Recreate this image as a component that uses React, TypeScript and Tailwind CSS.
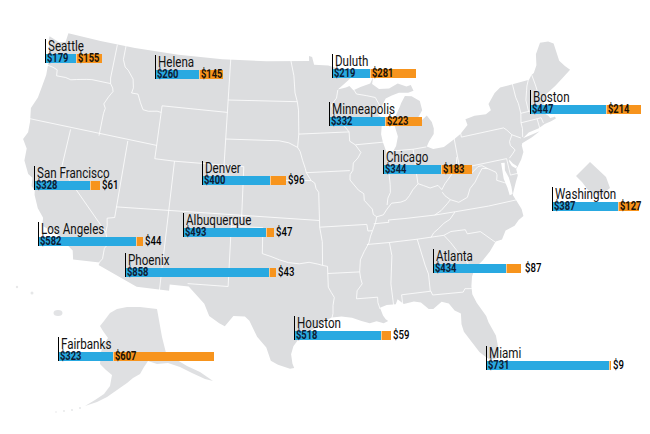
import React from "react";

type P = [number, number];
const RAD = Math.PI / 180;
const N = 0.60285;
const C = 1.3512;
function proj([lon, lat]: P): P {
  const rho = Math.sqrt(C - 2 * N * Math.sin(lat * RAD)) / N;
  const th = N * (lon + 98) * RAD;
  return [284 + 760 * rho * Math.sin(th), -776 + 760 * rho * Math.cos(th)];
}
function geoPath(pts: P[], close = false) {
  return (
    pts
      .map((p, i) => {
        const [x, y] = proj(p);
        return (i ? "L" : "M") + x.toFixed(1) + "," + y.toFixed(1);
      })
      .join("") + (close ? "Z" : "")
  );
}
function pxPath(pts: P[]) {
  return pts.map((p, i) => (i ? "L" : "M") + p[0] + "," + p[1]).join("") + "Z";
}

const outline: P[] = [
  [-124.7, 48.4], [-123.5, 48.15], [-122.8, 48.3], [-122.75, 49.0],
  [-119, 49], [-115, 49], [-110, 49], [-105, 49], [-100, 49], [-95.15, 49],
  [-95.15, 49.38], [-94.8, 49.3], [-94.6, 48.7], [-93, 48.6], [-92, 48.35],
  [-90.8, 48.1], [-89.6, 48.0], [-90.3, 47.7], [-91.3, 47.15], [-92.1, 46.75],
  [-91.2, 46.85], [-90.8, 46.95], [-90.4, 46.6], [-89.6, 46.8], [-88.5, 47.0],
  [-88.1, 47.45], [-88.3, 46.95], [-87.6, 46.5], [-86.5, 46.45], [-85.5, 46.75],
  [-84.6, 46.45], [-84.1, 46.5], [-83.9, 46.05], [-84.5, 45.95], [-85.5, 46.05],
  [-86.3, 45.9], [-87.0, 45.75], [-87.6, 45.1], [-88.0, 44.55], [-87.5, 44.3],
  [-87.7, 43.9], [-87.9, 43.1], [-87.8, 42.5], [-87.6, 41.9], [-87.5, 41.62],
  [-86.9, 41.7], [-86.5, 42.1], [-86.2, 42.8], [-86.4, 43.6], [-86.2, 44.3],
  [-85.6, 45.0], [-85.4, 45.25], [-84.9, 45.75], [-84.2, 45.65], [-83.4, 45.2],
  [-83.3, 44.5], [-83.9, 43.95], [-83.9, 43.6], [-83.5, 43.75], [-82.9, 44.05],
  [-82.5, 43.5], [-82.4, 43.0], [-82.5, 42.6], [-83.1, 42.1], [-83.4, 41.75],
  [-82.8, 41.5], [-81.7, 41.5], [-80.5, 41.95], [-79.8, 42.25], [-78.9, 42.8],
  [-79.0, 43.25], [-78.0, 43.37], [-76.8, 43.3], [-76.2, 43.5], [-76.3, 44.0],
  [-75.4, 44.7], [-74.7, 45.0], [-71.5, 45.0], [-71.1, 45.3], [-70.8, 45.4],
  [-70.3, 45.9], [-70.0, 46.7], [-69.2, 47.45], [-68.3, 47.35], [-67.8, 47.07],
  [-67.8, 45.7], [-67.4, 45.2], [-67.0, 44.8], [-68.0, 44.4], [-69.0, 44.0],
  [-70.2, 43.6], [-70.7, 43.0], [-70.6, 42.65], [-71.0, 42.3], [-70.6, 42.0],
  [-70.5, 41.8], [-70.0, 41.8], [-70.05, 42.05], [-69.95, 41.65], [-70.5, 41.55],
  [-71.2, 41.5], [-71.9, 41.3], [-73.0, 41.2], [-73.7, 40.9], [-72.6, 41.0],
  [-71.9, 41.07], [-72.8, 40.8], [-73.9, 40.55], [-74.0, 40.4], [-74.0, 39.9],
  [-74.4, 39.4], [-74.9, 38.95], [-75.1, 38.8], [-75.1, 38.3], [-75.4, 37.9],
  [-75.9, 37.15], [-76.0, 36.95], [-75.8, 36.5], [-75.5, 35.8], [-75.5, 35.25],
  [-76.0, 35.05], [-76.5, 34.7], [-77.4, 34.5], [-77.9, 33.9], [-78.5, 33.85],
  [-79.2, 33.2], [-80.0, 32.65], [-80.8, 32.2], [-81.2, 31.6], [-81.4, 30.9],
  [-81.45, 30.3], [-81.2, 29.6], [-80.6, 28.5], [-80.5, 28.0], [-80.1, 26.9],
  [-80.1, 25.8], [-80.4, 25.2], [-80.9, 25.15], [-81.2, 25.4], [-81.7, 25.9],
  [-82.1, 26.6], [-82.7, 27.6], [-82.8, 28.2], [-82.7, 29.0], [-83.2, 29.3],
  [-83.6, 29.9], [-84.2, 30.1], [-85.0, 29.65], [-85.4, 29.7], [-86.0, 30.25],
  [-86.6, 30.4], [-87.5, 30.3], [-88.0, 30.7], [-88.2, 30.35], [-89.0, 30.35],
  [-89.6, 30.2], [-89.4, 29.6], [-89.2, 29.3], [-89.0, 29.15], [-89.4, 29.0],
  [-90.0, 29.2], [-90.6, 29.1], [-91.3, 29.3], [-92.1, 29.6], [-93.0, 29.75],
  [-93.85, 29.7], [-94.7, 29.35], [-95.2, 29.0], [-96.2, 28.5], [-96.8, 28.1],
  [-97.2, 27.6], [-97.4, 27.0], [-97.3, 26.3], [-97.15, 25.95], [-97.5, 25.9],
  [-98.5, 26.2], [-99.1, 26.5], [-99.5, 27.5], [-100.3, 28.3], [-101.0, 29.5],
  [-101.4, 29.8], [-102.4, 29.8], [-103.1, 29.0], [-103.6, 29.2], [-104.5, 29.7],
  [-105.0, 30.6], [-106.0, 31.4], [-106.5, 31.8], [-108.2, 31.8], [-108.2, 31.33],
  [-111.1, 31.33], [-114.8, 32.5], [-114.7, 32.7], [-117.1, 32.55], [-117.3, 33.2],
  [-118.3, 33.75], [-118.5, 34.0], [-119.2, 34.2], [-120.5, 34.5], [-120.6, 35.1],
  [-121.3, 35.7], [-121.9, 36.6], [-122.0, 36.95], [-122.4, 37.2], [-122.5, 37.8],
  [-123.0, 38.0], [-123.7, 38.9], [-123.8, 39.8], [-124.4, 40.4], [-124.1, 41.0],
  [-124.2, 41.8], [-124.5, 42.8], [-124.1, 43.7], [-124.0, 44.6], [-123.9, 45.5],
  [-124.0, 46.3], [-124.1, 46.9], [-124.7, 48.2],
];

const chesapeake: P[] = [
  [-76.4, 39.5], [-76.05, 39.45], [-76.2, 38.9], [-76.0, 38.3], [-75.95, 37.6],
  [-76.0, 37.05], [-76.3, 37.0], [-76.35, 37.6], [-76.5, 38.3], [-76.45, 38.9],
];
const delaware: P[] = [
  [-75.55, 39.6], [-75.3, 39.25], [-74.95, 38.98], [-75.1, 38.82], [-75.45, 39.1], [-75.6, 39.45],
];

const lines: P[][] = [
  [[-124.3, 46.26], [-123.4, 46.2], [-122.9, 46.1], [-122.8, 45.65], [-121.8, 45.7], [-121.2, 45.62], [-120.6, 45.75], [-119.6, 45.92], [-119.0, 46.0], [-116.92, 46.0]],
  [[-117.04, 49], [-117.04, 46.42], [-116.92, 46.0], [-116.6, 45.7], [-116.5, 45.45], [-116.85, 45.0], [-117.2, 44.4], [-116.95, 44.1], [-117.03, 43.7], [-117.03, 42]],
  [[-124.5, 42], [-111.05, 42]],
  [[-120, 42], [-120, 39], [-114.63, 35.0]],
  [[-114.04, 42], [-114.04, 36.2]],
  [[-114.04, 36.2], [-114.74, 36.05], [-114.6, 35.5], [-114.63, 35.0], [-114.4, 34.5], [-114.13, 34.3], [-114.5, 33.8], [-114.5, 33.0], [-114.72, 32.72], [-114.8, 32.45]],
  [[-116.05, 49.1], [-116.05, 47.98], [-115.7, 47.45], [-115.3, 47.25], [-114.6, 46.65], [-114.4, 46.0], [-114.5, 45.6], [-113.8, 45.6], [-113.4, 45.0], [-113.0, 44.5], [-112.4, 44.45], [-111.5, 44.55], [-111.05, 44.5]],
  [[-111.05, 45], [-111.05, 41], [-109.05, 41]],
  [[-109.05, 41], [-109.05, 31.2]],
  [[-111.05, 45], [-104.05, 45]],
  [[-104.05, 49.1], [-104.05, 41]],
  [[-109.05, 41], [-102.05, 41], [-102.05, 37]],
  [[-102.05, 40], [-95.31, 40]],
  [[-114.05, 37], [-94.62, 37]],
  [[-103, 37], [-103, 32], [-106.62, 32]],
  [[-103, 36.5], [-100, 36.5], [-100, 34.56]],
  [[-100, 34.56], [-99.2, 34.35], [-98.4, 34.1], [-97.6, 33.9], [-96.6, 33.8], [-95.7, 33.9], [-94.9, 33.75], [-94.48, 33.64], [-94.04, 33.55]],
  [[-94.62, 37], [-94.62, 36.5], [-94.43, 35.4], [-94.48, 33.64]],
  [[-94.04, 33.55], [-94.04, 31.99], [-93.8, 31.6], [-93.55, 31.2], [-93.7, 30.6], [-93.73, 30.0], [-93.85, 29.6]],
  [[-94.04, 33.02], [-91.15, 33.0]],
  [[-94.62, 36.5], [-90.15, 36.5], [-90.1, 36.0], [-89.7, 36.0]],
  [[-91.2, 43.5], [-91.2, 42.8], [-90.65, 42.5], [-90.15, 41.9], [-90.5, 41.5], [-91.0, 41.15], [-91.1, 40.6], [-91.4, 40.3], [-91.45, 39.9], [-90.7, 39.1], [-90.2, 38.8], [-90.2, 38.3], [-89.5, 37.6], [-89.45, 37.2], [-89.15, 37.0], [-89.3, 36.6], [-89.6, 36.1], [-89.9, 35.6], [-90.1, 35.1], [-90.6, 34.5], [-91.0, 33.9], [-91.1, 33.3], [-91.15, 33.0], [-91.1, 32.5], [-91.0, 32.1], [-91.5, 31.6], [-91.6, 31.0]],
  [[-91.6, 31.0], [-89.73, 31.0], [-89.75, 30.6], [-89.6, 30.1]],
  [[-92.1, 46.7], [-92.3, 46.1], [-92.9, 45.6], [-92.75, 45.2], [-92.8, 44.75], [-92.1, 44.4], [-91.2, 43.5]],
  [[-104.05, 45.94], [-96.56, 45.94]],
  [[-97.23, 49.1], [-96.9, 47.9], [-96.8, 46.6], [-96.56, 45.94], [-96.45, 45.3], [-96.45, 43.5], [-96.6, 42.5]],
  [[-96.45, 43.5], [-91.2, 43.5]],
  [[-104.05, 43], [-98.5, 43], [-97.5, 42.85], [-96.6, 42.5]],
  [[-96.6, 42.5], [-96.35, 42.2], [-96.1, 41.5], [-95.85, 40.9], [-95.77, 40.6], [-95.3, 40.0]],
  [[-95.77, 40.6], [-91.4, 40.6]],
  [[-95.3, 40], [-94.95, 39.8], [-94.85, 39.4], [-94.6, 39.1], [-94.62, 37]],
  [[-90.64, 42.5], [-87.7, 42.5]],
  [[-90.4, 46.7], [-90.1, 46.3], [-89.0, 46.1], [-88.1, 45.9], [-87.8, 45.4], [-87.6, 45.0]],
  [[-87.53, 41.8], [-87.53, 39.3], [-87.6, 38.7], [-87.9, 38.3], [-88.05, 37.8]],
  [[-89.15, 37.0], [-88.5, 37.1], [-88.1, 37.5], [-87.6, 37.9], [-86.7, 37.9], [-86.2, 38.0], [-85.8, 38.3], [-85.4, 38.7], [-84.8, 39.1], [-84.3, 38.9], [-83.7, 38.65], [-82.9, 38.75], [-82.6, 38.4], [-82.2, 38.8], [-81.8, 39.1], [-81.4, 39.4], [-80.9, 39.7], [-80.6, 40.6]],
  [[-84.82, 41.7], [-84.82, 39.1]],
  [[-86.8, 41.76], [-84.8, 41.7], [-83.45, 41.73]],
  [[-89.5, 36.5], [-88.05, 36.5], [-88.07, 36.68], [-86.5, 36.65], [-83.68, 36.6], [-81.65, 36.6], [-78.5, 36.55], [-75.8, 36.55]],
  [[-90.3, 35.0], [-88.2, 35.0], [-85.6, 35.0], [-83.1, 35.0]],
  [[-84.3, 35.0], [-84.0, 35.3], [-83.5, 35.55], [-82.9, 35.9], [-82.3, 36.1], [-81.7, 36.6]],
  [[-83.1, 35.0], [-82.4, 35.2], [-81.05, 35.15], [-80.93, 34.82], [-79.7, 34.8], [-78.55, 33.8]],
  [[-83.1, 35.0], [-82.6, 34.4], [-82.2, 33.8], [-81.9, 33.3], [-81.5, 32.9], [-81.1, 32.1], [-80.85, 31.95]],
  [[-88.2, 35.0], [-88.1, 34.0], [-88.45, 31.9], [-88.4, 30.3]],
  [[-85.6, 35.0], [-85.2, 33.0], [-85.0, 32.3], [-85.05, 31.0]],
  [[-87.6, 30.2], [-87.6, 31.0], [-85.0, 31.0]],
  [[-85.0, 31.0], [-84.9, 30.7], [-82.2, 30.57], [-82.0, 30.8], [-81.4, 30.72]],
  [[-83.68, 36.6], [-83.0, 36.85], [-82.3, 37.3], [-81.95, 37.55], [-82.4, 37.9], [-82.6, 38.2]],
  [[-81.95, 37.55], [-81.2, 37.25], [-80.3, 37.5], [-79.9, 38.1], [-79.3, 38.5], [-78.8, 39.0], [-78.35, 39.4], [-77.8, 39.3]],
  [[-79.48, 39.72], [-79.48, 39.2], [-78.7, 39.6], [-78.3, 39.6], [-77.8, 39.3], [-77.45, 39.1], [-77.1, 38.9], [-77.05, 38.7], [-77.2, 38.3], [-76.5, 38.0], [-76.2, 37.9]],
  [[-80.52, 39.72], [-75.78, 39.72]],
  [[-80.52, 42.1], [-80.52, 39.72]],
  [[-79.76, 42.3], [-79.76, 42.0], [-75.35, 42.0], [-75.1, 41.8], [-74.7, 41.35]],
  [[-74.7, 41.35], [-73.9, 40.95]],
  [[-74.7, 41.35], [-75.1, 40.9], [-75.1, 40.6], [-74.75, 40.2], [-75.1, 39.95], [-75.5, 39.7]],
  [[-75.78, 39.72], [-75.79, 38.45], [-74.95, 38.45]],
  [[-73.34, 45.1], [-73.35, 44.0], [-73.25, 43.5], [-73.27, 42.74], [-73.5, 42.05], [-73.5, 41.6], [-73.7, 41.0]],
  [[-71.5, 45.1], [-71.9, 44.6], [-72.05, 44.3], [-72.4, 43.6], [-72.45, 42.73]],
  [[-73.27, 42.74], [-71.3, 42.7], [-70.7, 42.9]],
  [[-73.5, 42.05], [-71.8, 42.02], [-71.38, 42.02], [-71.3, 41.6]],
  [[-71.8, 42.02], [-71.8, 41.2]],
  [[-71.08, 45.3], [-71.0, 44.5], [-70.98, 43.8], [-70.6, 43.0]],
];

const alaska: P[] = [
  [104, 321], [110, 313], [117, 309], [127, 307], [140, 307], [157, 309], [162, 337],
  [167, 357], [177, 360], [187, 366], [200, 372], [213, 381], [205, 379], [192, 373],
  [180, 367], [168, 363], [157, 364], [148, 361], [144, 367], [140, 374], [133, 378],
  [127, 383], [117, 390], [107, 397], [97, 402], [85, 406], [95, 400], [104, 394],
  [110, 386], [112, 375], [106, 370], [100, 364], [101, 352], [104, 344], [108, 338],
  [103, 331], [100, 326],
];
const dc: P[] = [[590, 162], [606, 177], [610, 188], [600, 196], [588, 190], [582, 182], [576, 176]];

type City = { name: string; x: number; y: number; a: number; b: number; gap?: number };
const cities: City[] = [
  { name: "Seattle", x: 45, y: 54, a: 179, b: 155 },
  { name: "Helena", x: 155, y: 70, a: 260, b: 145 },
  { name: "Duluth", x: 332, y: 69, a: 219, b: 281 },
  { name: "Minneapolis", x: 329, y: 117, a: 332, b: 223 },
  { name: "Boston", x: 530, y: 105, a: 447, b: 214 },
  { name: "San Francisco", x: 34, y: 181, a: 328, b: 61 },
  { name: "Denver", x: 202, y: 176, a: 400, b: 96 },
  { name: "Chicago", x: 383, y: 165, a: 344, b: 183 },
  { name: "Washington", x: 552, y: 202, a: 387, b: 127 },
  { name: "Los Angeles", x: 38, y: 237, a: 582, b: 44 },
  { name: "Albuquerque", x: 183, y: 228, a: 493, b: 47 },
  { name: "Phoenix", x: 125, y: 268, a: 858, b: 43 },
  { name: "Atlanta", x: 433, y: 264, a: 434, b: 87, gap: 4 },
  { name: "Houston", x: 294, y: 331, a: 518, b: 59 },
  { name: "Fairbanks", x: 58, y: 352, a: 323, b: 607 },
  { name: "Miami", x: 486, y: 361, a: 731, b: 9 },
];

const FONT = { fontFamily: 'Roboto, "Liberation Sans", sans-serif' };

function CityBar({ c }: { c: City }) {
  const inside = c.b >= 100;
  return (
    <div
      className="absolute flex flex-col border-l-[1.5px] border-black"
      style={{ left: c.x, top: c.y - 15, ...FONT }}
    >
      <div className="pl-[2px] text-[14.5px] leading-[15px] text-[#111111] whitespace-nowrap">
        <span className="inline-block origin-left scale-x-[0.8]">{c.name}</span>
      </div>
      <div className="flex h-[9px] items-stretch">
        <div
          className="bg-[#29a9e1] text-[12px] font-bold leading-[9px] text-[#0d1b33] pl-[1px] whitespace-nowrap"
          style={{ width: c.a / 6 }}
        >
          <span className="inline-block origin-left scale-x-[0.78]">${c.a}</span>
        </div>
        <div
          className="bg-[#f7941d] border-l border-white/50 text-[12px] font-bold leading-[9px] text-[#1a1206] pl-[1px] whitespace-nowrap"
          style={{ width: c.b / 6 }}
        >
          {inside && <span className="inline-block origin-left scale-x-[0.78]">${c.b}</span>}
        </div>
        {!inside && (
          <div
            className="text-[12px] font-medium leading-[9px] text-black whitespace-nowrap"
            style={{ marginLeft: c.gap ?? 2 }}
          >
            <span className="inline-block origin-left scale-x-[0.8]">${c.b}</span>
          </div>
        )}
      </div>
    </div>
  );
}

export default function App() {
  return (
    <div className="relative w-[650px] h-[434px] overflow-hidden bg-white">
      <svg className="absolute inset-0" width={650} height={434} viewBox="0 0 650 434">
        <path d={geoPath(outline, true)} fill="#dcdddf" />
        <path d={geoPath(chesapeake, true)} fill="#ffffff" />
        <path d={geoPath(delaware, true)} fill="#ffffff" />
        <g fill="none" stroke="#ffffff" strokeWidth={0.8} strokeLinejoin="round">
          {lines.map((l, i) => (
            <path key={i} d={geoPath(l)} />
          ))}
        </g>
        <path d={pxPath(alaska)} fill="#dfe0e2" />
        <ellipse cx={58} cy={313} rx={4.5} ry={3} fill="#e2e3e5" />
        <circle cx={32} cy={293} r={1.5} fill="#e6e7e8" />
        <circle cx={17} cy={287} r={1.2} fill="#e8e8e9" />
        <g fill="#e6e7e8">
          <circle cx={80} cy={408} r={1} />
          <circle cx={72} cy={410} r={1} />
          <circle cx={64} cy={411} r={0.9} />
          <circle cx={56} cy={412} r={0.8} />
        </g>
        <path d={pxPath(dc)} fill="#dcdddf" />
      </svg>
      {cities.map((c) => (
        <CityBar key={c.name} c={c} />
      ))}
    </div>
  );
}
